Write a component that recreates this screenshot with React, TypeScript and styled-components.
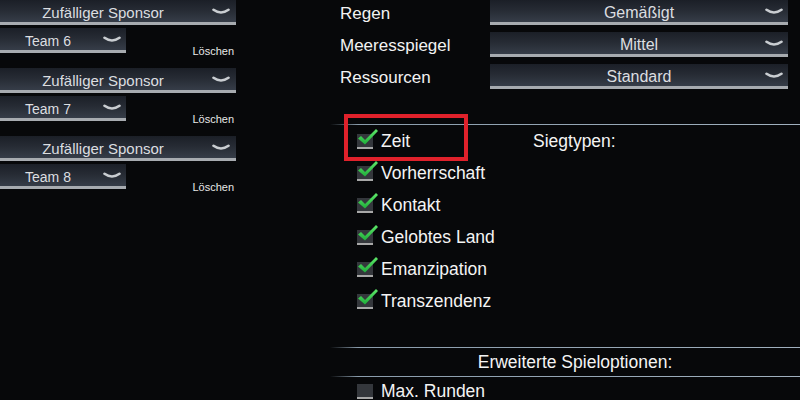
import React from "react";
import styled, { createGlobalStyle } from "styled-components";

const Global = createGlobalStyle`
  html, body { margin: 0; padding: 0; background: #07080a; }
  body { width: 800px; height: 400px; overflow: hidden; font-family: "Liberation Sans", Arial, sans-serif; }
`;

const Page = styled.div`
  display: grid;
  grid-template-columns: 236px 1fr;
  column-gap: 104px;
  width: 800px;
  height: 400px;
  background: #07080a;
  color: #f2f2f2;
  overflow: hidden;
`;

const LeftCol = styled.div`
  display: flex;
  flex-direction: column;
`;

const Group = styled.div`
  display: flex;
  flex-direction: column;
  gap: 3px;
  height: 68px;
`;

const TeamRow = styled.div`
  display: flex;
  align-items: flex-end;
  justify-content: space-between;
`;

const Delete = styled.span`
  font-size: 11px;
  color: #e8e8e8;
  line-height: 11px;
  margin-right: 2px;
  margin-bottom: -4px;
`;

const DropBox = styled.div<{ $w?: string; $fs: number; $pad: number }>`
  position: relative;
  box-sizing: border-box;
  width: ${(p) => p.$w ?? "100%"};
  height: 25px;
  display: flex;
  align-items: center;
  padding-top: 3px;
  padding-right: ${(p) => p.$pad}px;
  background: linear-gradient(180deg, #1b1f27 0%, #272c35 50%, #363d48 100%);
  border-bottom: 3px solid #a7abb0;
  font-size: ${(p) => p.$fs}px;
  color: #dcdee0;
`;

const DropText = styled.span`
  flex: 1;
  text-align: center;
  white-space: nowrap;
`;

const ChevronWrap = styled.span<{ $right: number }>`
  position: absolute;
  right: ${(p) => p.$right}px;
  top: 8px;
  display: flex;
`;

const Chevron = ({ right }: { right: number }) => (
  <ChevronWrap $right={right}>
    <svg width="18" height="8" viewBox="0 0 18 8">
      <path d="M1.5 1.8 Q9 7.2 16.5 1.8" fill="none" stroke="#c9cdd1" strokeWidth="2.6" strokeLinecap="round" />
    </svg>
  </ChevronWrap>
);

const Dropdown = ({ text, w, fs, pad, chev }: { text: string; w?: string; fs: number; pad: number; chev: number }) => (
  <DropBox $w={w} $fs={fs} $pad={pad}>
    <DropText>{text}</DropText>
    <Chevron right={chev} />
  </DropBox>
);

const RightCol = styled.div`
  position: relative;
  display: flex;
  flex-direction: column;
`;

const Settings = styled.div`
  display: flex;
  flex-direction: column;
  gap: 7px;
`;

const SettingRow = styled.div`
  display: grid;
  grid-template-columns: 150px 298px;
  align-items: center;
`;

const Label = styled.span`
  font-size: 17px;
  color: #f2f2f2;
  padding-top: 3px;
`;

const Divider = styled.div<{ $mt: number }>`
  height: 1px;
  margin-top: ${(p) => p.$mt}px;
  margin-left: -10px;
  background: linear-gradient(90deg, rgba(138, 156, 172, 0) 0%, #8a9cac 6%, #a0b0be 100%);
`;

const List = styled.div`
  display: flex;
  flex-direction: column;
`;

const Row = styled.div<{ $h?: number }>`
  height: ${(p) => p.$h ?? 32}px;
  display: flex;
  align-items: center;
  padding-left: 17px;
`;

const Item = styled.div<{ $w?: number }>`
  display: flex;
  align-items: center;
  gap: 8px;
  width: ${(p) => (p.$w ? `${p.$w}px` : "auto")};
  font-size: 17.5px;
  color: #f4f4f4;
`;

const Box = styled.span`
  position: relative;
  box-sizing: border-box;
  width: 16px;
  height: 15px;
  background: #34373c;
  border-bottom: 2px solid #a8a8a8;
  flex: none;
`;

const CheckMark = styled.svg`
  position: absolute;
  left: 0;
  top: -6px;
`;

const Check = ({ on }: { on: boolean }) => (
  <Box>
    {on && (
      <CheckMark width="22" height="18" viewBox="0 0 22 18">
        <defs>
          <linearGradient id="g" x1="0" y1="0" x2="0" y2="1">
            <stop offset="0" stopColor="#5fe86a" />
            <stop offset="1" stopColor="#1fae3a" />
          </linearGradient>
        </defs>
        <path d="M1 10.5 L4 8 L8 12 L19 1 L21 3 L8 16.5 Z" fill="url(#g)" />
      </CheckMark>
    )}
  </Box>
);

const Title = styled.span`
  font-size: 17.5px;
  color: #f4f4f4;
`;

const SectionHead = styled.div`
  height: 28px;
  display: flex;
  align-items: center;
  justify-content: center;
  padding-left: 10px;
  font-size: 17.5px;
  color: #f4f4f4;
`;

const Highlight = styled.div`
  position: absolute;
  left: 4px;
  top: 114px;
  width: 124px;
  height: 47px;
  box-sizing: border-box;
  border: 4px solid #e0212b;
  pointer-events: none;
`;

const victories = ["Vorherrschaft", "Kontakt", "Gelobtes Land", "Emanzipation", "Transzendenz"];

export default function App() {
  return (
    <>
      <Global />
      <Page>
        <LeftCol>
          {[6, 7, 8].map((n) => (
            <Group key={n}>
              <Dropdown text="Zufälliger Sponsor" fs={15} pad={30} chev={6} />
              <TeamRow>
                <Dropdown text={`Team ${n}`} w="126px" fs={14} pad={30} chev={5} />
                <Delete>Löschen</Delete>
              </TeamRow>
            </Group>
          ))}
        </LeftCol>
        <RightCol>
          <Settings>
            <SettingRow>
              <Label>Regen</Label>
              <Dropdown text="Gemäßigt" fs={16} pad={0} chev={5} />
            </SettingRow>
            <SettingRow>
              <Label>Meeresspiegel</Label>
              <Dropdown text="Mittel" fs={16} pad={0} chev={5} />
            </SettingRow>
            <SettingRow>
              <Label>Ressourcen</Label>
              <Dropdown text="Standard" fs={16} pad={0} chev={5} />
            </SettingRow>
          </Settings>
          <Divider $mt={35} />
          <List>
            <Row>
              <Item $w={176}>
                <Check on />
                Zeit
              </Item>
              <Title>Siegtypen:</Title>
            </Row>
            {victories.map((v) => (
              <Row key={v}>
                <Item>
                  <Check on />
                  {v}
                </Item>
              </Row>
            ))}
          </List>
          <Divider $mt={30} />
          <SectionHead>Erweiterte Spieloptionen:</SectionHead>
          <Divider $mt={0} />
          <Row $h={29}>
            <Item>
              <Check on={false} />
              Max. Runden
            </Item>
          </Row>
          <Highlight />
        </RightCol>
      </Page>
    </>
  );
}
